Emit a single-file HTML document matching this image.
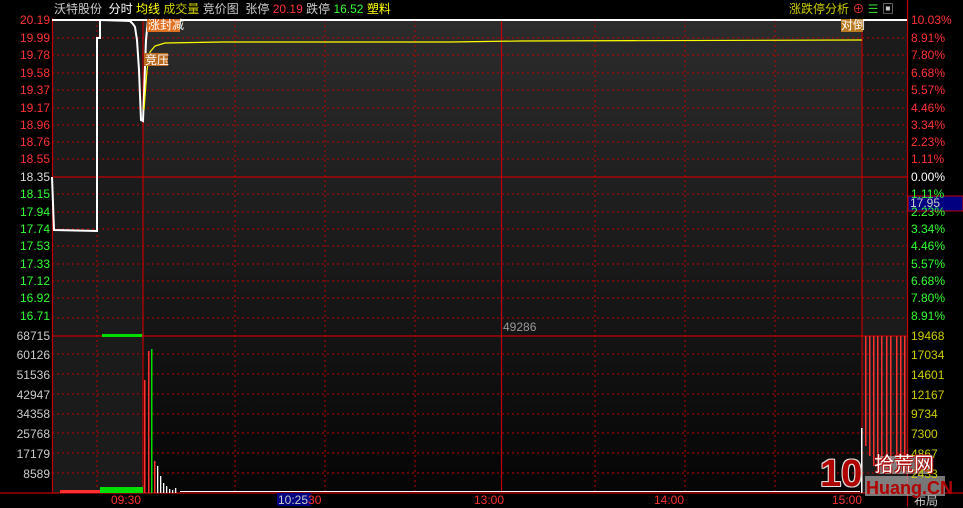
<!DOCTYPE html>
<html><head><meta charset="utf-8"><style>
body{margin:0;width:963px;height:506px;background:#000;overflow:hidden;position:relative;font-family:"Liberation Sans","Noto Sans CJK SC",sans-serif}
.t{position:absolute;font-size:12px;white-space:nowrap;line-height:14px}
.l{position:absolute;left:0;width:50px;text-align:right;font-size:12px;line-height:12px}
.r{position:absolute;left:911px;font-size:12px;line-height:12px}
.w{text-shadow:1px 0 #ddd,-1px 0 #ddd,0 1px #ddd,0 -1px #ddd,1px 1px #ddd,-1px -1px #ddd,1px -1px #ddd,-1px 1px #ddd}
</style></head><body>
<svg width="963" height="506" style="position:absolute;left:0;top:0">
<defs>
<linearGradient id="g1" x1="0" y1="0" x2="0" y2="1"><stop offset="0" stop-color="#2c2c2c"/><stop offset="1" stop-color="#141414"/></linearGradient>
<linearGradient id="g2" x1="0" y1="0" x2="0" y2="1"><stop offset="0" stop-color="#141414"/><stop offset="1" stop-color="#050505"/></linearGradient>
</defs>
<rect x="52" y="20" width="855" height="316" fill="url(#g1)"/>
<rect x="52" y="336" width="855" height="157" fill="url(#g2)"/>
<rect x="52" y="20" width="91" height="473" fill="#1b1b1b"/>
<rect x="862" y="20" width="45" height="473" fill="#1b1b1b"/>
<g stroke="#c00000" stroke-width="1" stroke-dasharray="2,3">
<line x1="52" y1="38" x2="907" y2="38"/><line x1="52" y1="55" x2="907" y2="55"/><line x1="52" y1="73" x2="907" y2="73"/><line x1="52" y1="90" x2="907" y2="90"/><line x1="52" y1="108" x2="907" y2="108"/><line x1="52" y1="125" x2="907" y2="125"/><line x1="52" y1="142" x2="907" y2="142"/><line x1="52" y1="159" x2="907" y2="159"/>
<line x1="52" y1="194" x2="907" y2="194"/><line x1="52" y1="212" x2="907" y2="212"/><line x1="52" y1="229" x2="907" y2="229"/><line x1="52" y1="246" x2="907" y2="246"/><line x1="52" y1="264" x2="907" y2="264"/><line x1="52" y1="281" x2="907" y2="281"/><line x1="52" y1="298" x2="907" y2="298"/><line x1="52" y1="318" x2="907" y2="318"/>
<line x1="52" y1="354" x2="907" y2="354"/><line x1="52" y1="374" x2="907" y2="374"/><line x1="52" y1="394" x2="907" y2="394"/><line x1="52" y1="414" x2="907" y2="414"/><line x1="52" y1="433" x2="907" y2="433"/><line x1="52" y1="453" x2="907" y2="453"/><line x1="52" y1="473" x2="907" y2="473"/>
<line x1="97" y1="20" x2="97" y2="493"/><line x1="235" y1="20" x2="235" y2="493"/><line x1="325" y1="20" x2="325" y2="493"/><line x1="415" y1="20" x2="415" y2="493"/><line x1="595" y1="20" x2="595" y2="493"/><line x1="685" y1="20" x2="685" y2="493"/><line x1="775" y1="20" x2="775" y2="493"/>
</g>
<g stroke="#c00000" stroke-width="1.2">
<line x1="52" y1="177" x2="907" y2="177"/><line x1="52" y1="336" x2="907" y2="336"/><line x1="0" y1="493" x2="963" y2="493"/>
<line x1="52.5" y1="18" x2="52.5" y2="493"/><line x1="143" y1="20" x2="143" y2="493"/><line x1="501.5" y1="20" x2="501.5" y2="493"/><line x1="862" y1="20" x2="862" y2="493"/><line x1="907.5" y1="0" x2="907.5" y2="506"/>
</g>
<line x1="52" y1="20" x2="907" y2="20" stroke="#fff" stroke-width="2"/>
<polyline fill="none" stroke="#fff" stroke-width="2" points="52,177 54,230 97,231 97,38 100,38 100,20 130,21 133,24 135,27 137,40 139,70 141,120 143,121 144,95 146,40 148,20 150,20"/>
<polyline fill="none" stroke="#ffff00" stroke-width="1.2" points="144,110 147,70 150,52 155,46 165,43 222,42 450,42 520,41 862,40"/>
<g fill="#00dd00"><rect x="102" y="334" width="40" height="3"/><rect x="100" y="487" width="43" height="6"/></g>
<g fill="#ff3030"><rect x="60" y="490" width="40" height="3"/><rect x="144" y="380" width="1.5" height="113"/><rect x="148" y="351" width="1.5" height="142"/><rect x="154" y="461" width="1.5" height="32"/>
<rect x="865" y="336" width="1.5" height="110"/><rect x="869" y="336" width="1.5" height="120"/><rect x="873" y="336" width="1.5" height="130"/><rect x="877" y="336" width="1.5" height="130"/><rect x="881" y="336" width="1.5" height="130"/><rect x="886" y="336" width="1.5" height="130"/><rect x="890" y="336" width="1.5" height="130"/><rect x="896" y="336" width="1.5" height="130"/><rect x="900" y="336" width="1.5" height="130"/><rect x="904" y="336" width="1.5" height="130"/></g>
<rect x="151" y="349" width="1.5" height="144" fill="#00dd00"/>
<g fill="#fff"><rect x="157" y="466" width="1.3" height="27"/><rect x="160" y="476" width="1.3" height="17"/><rect x="163" y="483" width="1.3" height="10"/><rect x="166" y="486" width="1.3" height="7"/><rect x="169" y="489" width="1.3" height="4"/><rect x="172" y="490" width="1.3" height="3"/><rect x="175" y="488" width="1.3" height="5"/><rect x="180" y="491" width="680" height="1"/><rect x="861" y="428" width="1.5" height="65"/></g>
<rect x="147" y="19" width="33" height="13" fill="#e07020"/>
<rect x="144" y="53" width="24" height="13" fill="#b86a20"/>
<rect x="841" y="19" width="22" height="13" fill="#b87a20"/>
<rect x="908" y="196" width="55" height="15" fill="#000080" stroke="#c00000"/>
<rect x="277" y="493" width="34" height="13" fill="#000080"/>
<rect x="878" y="456" width="52" height="18" fill="#aaa" opacity="0.7"/>
<rect x="865" y="476" width="80" height="20" fill="#aaa" opacity="0.7"/>
</svg>
<div class="t" style="left:54px;top:2px;color:#ccc">沃特股份 &nbsp;<span style="color:#fff">分时</span> <span style="color:#ff0">均线</span> <span style="color:#cc0">成交量</span> 竞价图 &nbsp;张停 <span style="color:#f33">20.19</span> 跌停 <span style="color:#3f3">16.52</span> <span style="color:#ff0">塑料</span></div>
<div class="t" style="left:789px;top:2px;color:#cc0">涨跌停分析 <span style="color:#e33">⊕</span> <span style="color:#3c3">☰</span> <span style="color:#ccc">▣</span></div>
<div class="t" style="left:148px;top:18px;color:#fff">涨封减</div>
<div class="t" style="left:145px;top:53px;color:#fff">竞压</div>
<div class="t" style="left:841px;top:18px;color:#fff">对倒</div>
<div class="l" style="top:14px;color:#f33">20.19</div><div class="l" style="top:32px;color:#f33">19.99</div><div class="l" style="top:49px;color:#f33">19.78</div><div class="l" style="top:67px;color:#f33">19.58</div><div class="l" style="top:84px;color:#f33">19.37</div><div class="l" style="top:102px;color:#f33">19.17</div><div class="l" style="top:119px;color:#f33">18.96</div><div class="l" style="top:136px;color:#f33">18.76</div><div class="l" style="top:153px;color:#f33">18.55</div><div class="l" style="top:171px;color:#ddd">18.35</div><div class="l" style="top:188px;color:#3f3">18.15</div><div class="l" style="top:206px;color:#3f3">17.94</div><div class="l" style="top:223px;color:#3f3">17.74</div><div class="l" style="top:240px;color:#3f3">17.53</div><div class="l" style="top:258px;color:#3f3">17.33</div><div class="l" style="top:275px;color:#3f3">17.12</div><div class="l" style="top:292px;color:#3f3">16.92</div><div class="l" style="top:310px;color:#3f3">16.71</div>
<div class="l" style="top:330px;color:#ccc">68715</div><div class="l" style="top:349px;color:#ccc">60126</div><div class="l" style="top:369px;color:#ccc">51536</div><div class="l" style="top:389px;color:#ccc">42947</div><div class="l" style="top:408px;color:#ccc">34358</div><div class="l" style="top:428px;color:#ccc">25768</div><div class="l" style="top:448px;color:#ccc">17179</div><div class="l" style="top:468px;color:#ccc">8589</div>
<div class="r" style="top:14px;color:#f33">10.03%</div><div class="r" style="top:32px;color:#f33">8.91%</div><div class="r" style="top:49px;color:#f33">7.80%</div><div class="r" style="top:67px;color:#f33">6.68%</div><div class="r" style="top:84px;color:#f33">5.57%</div><div class="r" style="top:102px;color:#f33">4.46%</div><div class="r" style="top:119px;color:#f33">3.34%</div><div class="r" style="top:136px;color:#f33">2.23%</div><div class="r" style="top:153px;color:#f33">1.11%</div><div class="r" style="top:171px;color:#fff">0.00%</div><div class="r" style="top:188px;color:#3f3">1.11%</div><div class="r" style="top:206px;color:#3f3">2.23%</div><div class="r" style="top:223px;color:#3f3">3.34%</div><div class="r" style="top:240px;color:#3f3">4.46%</div><div class="r" style="top:258px;color:#3f3">5.57%</div><div class="r" style="top:275px;color:#3f3">6.68%</div><div class="r" style="top:292px;color:#3f3">7.80%</div><div class="r" style="top:310px;color:#3f3">8.91%</div>
<div class="r" style="top:197px;left:910px;color:#ccc">17.95</div>
<div class="r" style="top:330px;color:#cc0">19468</div><div class="r" style="top:349px;color:#cc0">17034</div><div class="r" style="top:369px;color:#cc0">14601</div><div class="r" style="top:389px;color:#cc0">12167</div><div class="r" style="top:408px;color:#cc0">9734</div><div class="r" style="top:428px;color:#cc0">7300</div><div class="r" style="top:448px;color:#cc0">4867</div><div class="r" style="top:468px;color:#cc0">2433</div>
<div class="t" style="left:503px;top:320px;color:#999">49286</div>
<div class="t" style="left:111px;top:493px;color:#f33">09:30</div>
<div class="t" style="left:278px;top:493px;color:#ccc">10:25<span style="color:#f33">30</span></div>
<div class="t" style="left:474px;top:493px;color:#f33">13:00</div>
<div class="t" style="left:654px;top:493px;color:#f33">14:00</div>
<div class="t" style="left:832px;top:493px;color:#f33">15:00</div>
<div class="t" style="left:914px;top:494px;color:#ccc">布局</div>
<div class="t w" style="left:820px;top:454px;font-size:38px;line-height:40px;font-weight:bold;color:#b00000">10</div>
<div class="t" style="left:874px;top:454px;font-size:20px;line-height:22px;color:#fff;text-shadow:1px 1px #b00000,-1px -1px #b00000">拾荒网</div>
<div class="t" style="left:866px;top:478px;font-size:18px;line-height:20px;font-weight:bold;color:#b00000">Huang.CN</div>
</body></html>
